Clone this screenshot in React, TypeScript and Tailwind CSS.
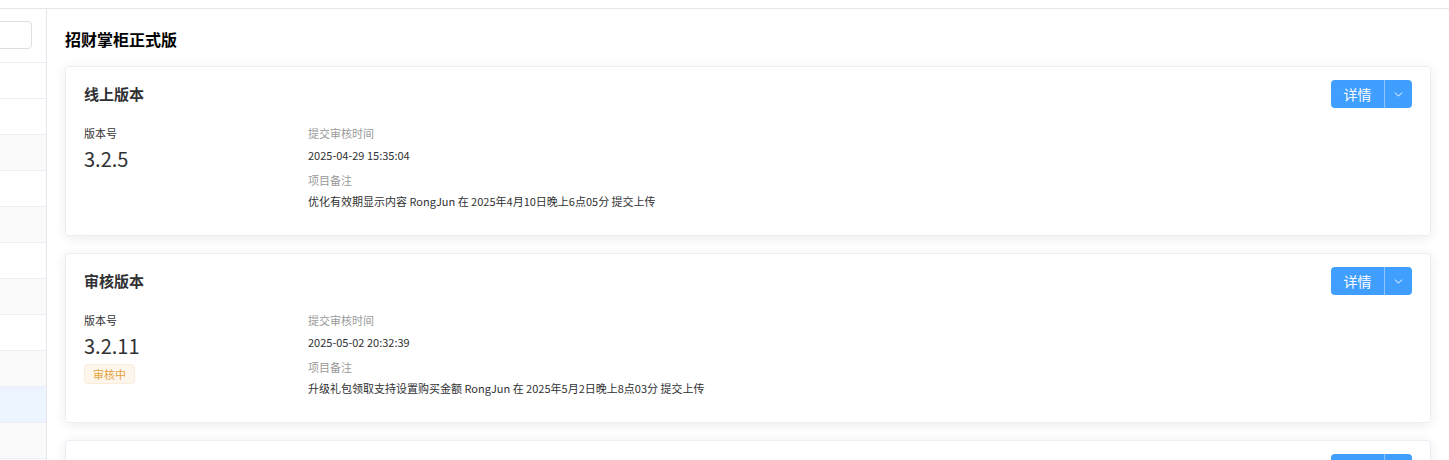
import { ChevronDown } from 'lucide-react';

type Version = {
  title: string;
  version: string;
  time: string;
  note: string;
  status?: string;
};

const versions: Version[] = [
  {
    title: '线上版本',
    version: '3.2.5',
    time: '2025-04-29 15:35:04',
    note: '优化有效期显示内容 RongJun 在 2025年4月10日晚上6点05分 提交上传',
  },
  {
    title: '审核版本',
    version: '3.2.11',
    time: '2025-05-02 20:32:39',
    note: '升级礼包领取支持设置购买金额 RongJun 在 2025年5月2日晚上8点03分 提交上传',
    status: '审核中',
  },
  {
    title: '体验版本',
    version: '3.2.12',
    time: '2025-05-03 10:12:20',
    note: '',
  },
];

// sidebar rows: '' = white, 'g' = striped, 'a' = selected
const rows = ['', '', 'g', '', 'g', '', 'g', '', 'g', 'a', 'g', ''];

function DetailButton() {
  return (
    <div className="flex h-[28px] overflow-hidden rounded-[4px] bg-[#409eff] text-white">
      <button className="w-[53px] text-[14px] leading-[28px]">详情</button>
      <div className="w-px bg-white/40" />
      <button className="flex w-[27px] items-center justify-center">
        <ChevronDown size={13} strokeWidth={1.8} />
      </button>
    </div>
  );
}

function VersionCard({ v }: { v: Version }) {
  return (
    <div className="mb-[17px] rounded-[4px] border border-[#ebeef5] bg-white px-[18px] pt-[13px] pb-[24px] shadow-[0_2px_12px_0_rgba(0,0,0,0.08)]">
      <div className="flex h-[28px] items-center justify-between">
        <div className="text-[15px] font-bold text-[#303133]">{v.title}</div>
        <DetailButton />
      </div>
      <div className="mt-[15px] flex">
        <div className="w-[224px] shrink-0">
          <div className="text-[11px] leading-[20px] text-[#333]">版本号</div>
          <div className="mt-[2px] text-[20px] leading-[28px] text-[#303133]">{v.version}</div>
          {v.status && (
            <span className="inline-block rounded-[4px] border border-[#faecd8] bg-[#fdf6ec] px-[8px] text-[11px] leading-[18px] text-[#e6a23c]">
              {v.status}
            </span>
          )}
        </div>
        <div className="flex-1">
          <div className="text-[11px] leading-[20px] text-[#999]">提交审核时间</div>
          <div className="mt-[2px] text-[11px] leading-[20px] text-[#303133]">{v.time}</div>
          <div className="mt-[5px] text-[11px] leading-[20px] text-[#999]">项目备注</div>
          <div className="mt-px text-[11px] leading-[20px] text-[#303133]">{v.note}</div>
        </div>
      </div>
    </div>
  );
}

export default function App() {
  return (
    <div
      className="flex h-screen flex-col overflow-hidden bg-white"
      style={{ fontFamily: '"Noto Sans CJK SC", "Noto Sans", sans-serif' }}
    >
      <div className="h-[9px] shrink-0 border-b border-[#e6e6e6]" />
      <div className="flex flex-1 overflow-hidden">
        {/* left list, mostly cut off */}
        <div className="w-[47px] shrink-0 overflow-hidden border-r border-[#e4e7ed]">
          <div className="flex h-[53px] items-start justify-end pt-[12px] pr-[14px]">
            <div className="h-[28px] w-[60px] shrink-0 rounded-[4px] border border-[#dcdfe6]" />
          </div>
          {rows.map((r, i) => (
            <div
              key={i}
              className={
                'h-[36px] border-t border-[#ebeef5] ' +
                (r === 'a' ? 'bg-[#ecf5ff]' : r === 'g' ? 'bg-[#fafafa]' : 'bg-white')
              }
            />
          ))}
        </div>

        <div className="flex-1 px-[18px] pt-[18px]">
          <h1 className="mb-[15px] text-[16px] font-bold leading-[24px] text-black">招财掌柜正式版</h1>
          {versions.map((v) => (
            <VersionCard key={v.title} v={v} />
          ))}
        </div>
      </div>
    </div>
  );
}
